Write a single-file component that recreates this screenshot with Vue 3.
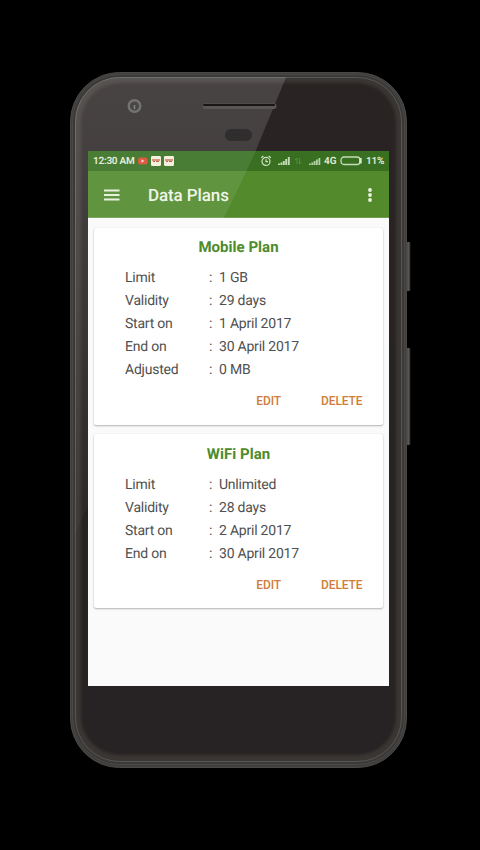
<script setup>
const plans = [
  {
    name: 'Mobile Plan',
    rows: [
      ['Limit', '1 GB'],
      ['Validity', '29 days'],
      ['Start on', '1 April 2017'],
      ['End on', '30 April 2017'],
      ['Adjusted', '0 MB'],
    ],
  },
  {
    name: 'WiFi Plan',
    rows: [
      ['Limit', 'Unlimited'],
      ['Validity', '28 days'],
      ['Start on', '2 April 2017'],
      ['End on', '30 April 2017'],
    ],
  },
]
</script>

<template>
  <main class="stage">
    <div class="phone">
      <svg class="shell" width="344" height="700" viewBox="68 70 344 700" aria-hidden="true">
        <defs>
          <linearGradient id="face" x1="0" y1="0" x2="0" y2="1">
            <stop offset="0" stop-color="#292323" />
            <stop offset="1" stop-color="#272223" />
          </linearGradient>
          <linearGradient id="gloss" x1="0" y1="72" x2="0" y2="600" gradientUnits="userSpaceOnUse">
            <stop offset="0" stop-color="#fff" stop-opacity=".15" />
            <stop offset=".25" stop-color="#fff" stop-opacity=".12" />
            <stop offset="1" stop-color="#fff" stop-opacity="0" />
          </linearGradient>
          <linearGradient id="key" x1="0" y1="0" x2="1" y2="0">
            <stop offset="0" stop-color="#353331" />
            <stop offset=".65" stop-color="#5b5753" />
            <stop offset="1" stop-color="#24201e" />
          </linearGradient>
          <filter id="soften" color-interpolation-filters="sRGB"><feGaussianBlur stdDeviation="1.5" /></filter>
          <clipPath id="faceClip"><rect x="75" y="77" width="327" height="685" rx="45" /></clipPath>
        </defs>
        <rect x="405" y="242" width="5.500" height="49" rx="1" fill="url(#key)" />
        <rect x="405" y="348" width="5.500" height="97" rx="1" fill="url(#key)" />
        <rect x="70.500" y="72.500" width="336" height="695" rx="49" fill="#403e3d" stroke="#4a4948" />
        <rect x="72.500" y="74.500" width="332" height="690" rx="47" fill="#3a3938" stroke="#494847" />
        <rect x="75.500" y="77.500" width="326" height="684" rx="44" fill="#3a3633" stroke="#585654" />
        <rect x="81" y="83" width="315" height="672" rx="39" fill="url(#face)" filter="url(#soften)" />
        <path d="M68 70H289L256 150L68 548Z" fill="url(#gloss)" clip-path="url(#faceClip)" />
        <circle cx="134.500" cy="106" r="5.800" fill="#4a4747" stroke="#757272" stroke-width="2.400" />
        <path d="M134.500 105v4" stroke="#858282" stroke-width="1.500" />
        <rect x="202.500" y="103.500" width="74" height="5.500" rx="2.700" fill="#5a5655" />
        <path d="M204 105H274" stroke="#191616" stroke-width="2" stroke-linecap="round" />
        <rect x="225" y="129" width="27" height="12" rx="6" fill="#302d2e" />
      </svg>

      <section class="screen">
        <header class="top">
          <div class="status">
            <span class="clock">12:30 AM</span>
            <svg class="notices" width="38" height="12" viewBox="0 0 38 12">
              <rect x="1" y="2.500" width="9.500" height="7" rx="2" fill="#d84c34" />
              <path d="M4.500 4.300L7.300 6L4.500 7.700Z" fill="#f7d8c8" />
              <rect x="14" y="1" width="10" height="10" rx="1.200" fill="#f4efda" />
              <rect x="27" y="1" width="10" height="10" rx="1.200" fill="#f4efda" />
              <path d="M15 5h8M28 5h8" stroke="#c66c55" stroke-width="1.500" />
              <path d="M16 6.500h2m1 0h3M29 6.500h2m1 0h3" stroke="#b75140" stroke-width="1" />
            </svg>
            <svg class="signals" width="61" height="12" viewBox="0 0 61 12" fill="none">
              <g stroke="#d0e2c2" stroke-width="1.200">
                <circle cx="6" cy="6.400" r="4" />
                <path d="M1.200 2.800L3.400 1M10.800 2.800L8.600 1M6 4.200v2.500h2" />
              </g>
              <path d="M19 10V8.500M21.400 10V7.500M23.800 10V6M26.200 10V4M28.800 10V2" stroke="#c6dbb7" stroke-width="1.900" />
              <path d="M37 9V3L35 5M39.500 3v6l2-2" stroke="#5b8e45" />
              <path d="M50 10V8.500M52.300 10V7.500M54.600 10V6M56.900 10V4.500M59.400 10V3" stroke="#b7d0a6" stroke-width="1.800" />
            </svg>
            <span class="network">4G</span>
            <svg class="battery" width="24" height="10" viewBox="0 0 24 10" fill="none">
              <rect x="1" y="1" width="19" height="7.500" rx="3" stroke="#c6dcb9" stroke-width="1.300" />
              <path d="M20.500 2v5.500" stroke="#d8e8ce" stroke-width="2.400" />
            </svg>
            <span class="charge">11%</span>
          </div>
          <div class="toolbar">
            <svg class="menu" width="16" height="12" viewBox="0 0 16 12">
              <path d="M0 1.500h15.500M0 6h15.500M0 10.500h15.500" stroke="#e6f0dc" stroke-width="1.800" />
            </svg>
            <h1>Data Plans</h1>
            <svg class="more" width="4" height="14" viewBox="0 0 4 14" fill="#eaf3e2">
              <circle cx="2" cy="2" r="1.900" /><circle cx="2" cy="7" r="1.900" /><circle cx="2" cy="12" r="1.900" />
            </svg>
          </div>
          <svg class="shine" width="301" height="67" viewBox="0 0 301 67">
            <path d="M0 0H168L136 67H0Z" fill="#fff" fill-opacity=".09" />
          </svg>
        </header>
        <div class="plans">
          <article v-for="plan in plans" :key="plan.name" class="card">
            <h2>{{ plan.name }}</h2>
            <dl>
              <div v-for="row in plan.rows" :key="row[0]" class="row">
                <dt>{{ row[0] }}</dt>
                <span class="colon">:</span>
                <dd>{{ row[1] }}</dd>
              </div>
            </dl>
            <div class="actions">
              <button>EDIT</button>
              <button>DELETE</button>
            </div>
          </article>
        </div>
      </section>
    </div>
  </main>
</template>

<style>
body { margin: 0; background: #000; }
</style>

<style scoped>
* { box-sizing: border-box; }
.stage {
  width: 480px;
  height: 850px;
  padding: 70px 68px;
  background: #000;
  font-family: Roboto, "Liberation Sans", sans-serif;
  text-rendering: geometricPrecision;
}
.phone { position: relative; width: 344px; height: 700px; padding: 81px 23px 0 20px; }
.shell { position: absolute; inset: 0; }
.screen { position: relative; width: 301px; height: 535px; background: #fafafa; overflow: hidden; }
.top { position: relative; height: 67px; background: #528a2c; border-bottom: 1px solid #6d9d4f; }
.shine { position: absolute; inset: 0; pointer-events: none; }
.status {
  display: flex;
  align-items: center;
  height: 20px;
  padding: 0 5px;
  background: #386f20;
  color: #e3eedb;
  font-size: 10px;
  font-weight: 600;
  white-space: nowrap;
}
.clock { width: 42px; letter-spacing: -.25px; }
.notices { margin-left: 2px; }
.signals { margin-left: 85px; }
.network { margin-left: 3px; width: 15px; }
.battery { margin-left: 1px; }
.charge { margin-left: 2px; letter-spacing: -.25px; }
.toolbar { display: flex; align-items: center; height: 47px; padding: 0 17px 0 15.500px; }
h1 { margin: 2px 0 0 28.500px; font-size: 17px; font-weight: 500; line-height: 20px; letter-spacing: -.1px; color: #edf5e7; }
.more { margin-left: auto; }
.plans { display: flex; flex-direction: column; gap: 9px; padding: 10px 6px 0 6px; }
.card {
  padding: 9px 0 13px;
  border-radius: 2px;
  background: #fff;
  box-shadow: 0 1px 2px rgba(0, 0, 0, .28), 0 0 1px rgba(0, 0, 0, .12);
}
h2 { margin: 0; text-align: center; font-size: 15px; font-weight: 700; line-height: 20px; letter-spacing: .03px; color: #4d8b2b; }
dl { margin: 10px 0 0; padding-left: 31px; }
.row { display: flex; height: 23px; line-height: 23px; font-size: 14px; letter-spacing: -.22px; color: #505050; }
dt { width: 84px; }
dd { margin: 0; }
.colon { width: 10px; }
.actions { display: flex; justify-content: flex-end; gap: 40px; margin-top: 8px; padding-right: 20.500px; height: 22px; }
.card + .card { padding: 9.500px 0 12.500px; }
button {
  padding: 0;
  border: 0;
  background: none;
  font: 500 12px/22px Roboto, "Liberation Sans", sans-serif;
  letter-spacing: -.1px;
  color: #d07c3a;
}
</style>
